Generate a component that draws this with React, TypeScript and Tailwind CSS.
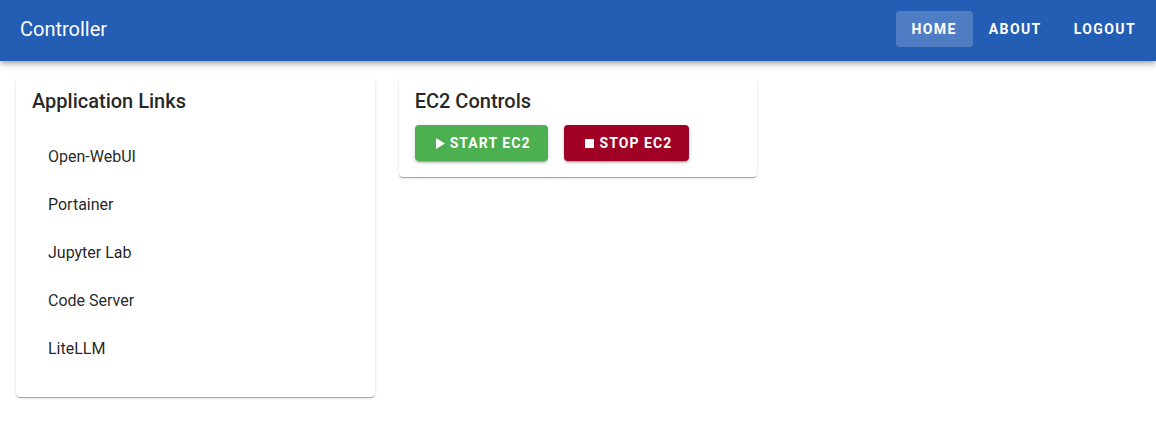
import React from "react";

const links = ["Open-WebUI", "Portainer", "Jupyter Lab", "Code Server", "LiteLLM"];

const nav = [
  { label: "HOME", active: true },
  { label: "ABOUT", active: false },
  { label: "LOGOUT", active: false },
];

const cardShadow =
  "shadow-[0px_2px_1px_-1px_rgba(0,0,0,0.2),0px_1px_1px_0px_rgba(0,0,0,0.14),0px_1px_3px_0px_rgba(0,0,0,0.12)]";

const btnShadow =
  "shadow-[0px_3px_1px_-2px_rgba(0,0,0,0.2),0px_2px_2px_0px_rgba(0,0,0,0.14),0px_1px_5px_0px_rgba(0,0,0,0.12)]";

function PlayIcon() {
  return (
    <svg width="9" height="11" viewBox="0 0 9 11" className="shrink-0">
      <path d="M0 0 L9 5.5 L0 11 Z" fill="currentColor" />
    </svg>
  );
}

function StopIcon() {
  return <span className="block size-[9px] shrink-0 bg-white" />;
}

export default function App() {
  return (
    <div className="min-h-[430px] bg-white font-['Roboto',sans-serif] text-[rgba(0,0,0,0.87)]">
      <header className="relative z-10 flex h-[61px] items-center bg-[#235db4] pb-[3px] pl-5 pr-1 text-white shadow-[0px_2px_4px_-1px_rgba(0,0,0,0.2),0px_4px_5px_0px_rgba(0,0,0,0.14),0px_1px_10px_0px_rgba(0,0,0,0.12)]">
        <h1 className="text-[20px] font-normal leading-none">Controller</h1>
        <nav className="ml-auto flex items-center">
          {nav.map((item) => (
            <button
              key={item.label}
              className={`h-9 rounded px-4 text-[14px] font-bold tracking-[0.1em] ${
                item.active ? "bg-white/20" : ""
              }`}
            >
              {item.label}
            </button>
          ))}
        </nav>
      </header>

      <main className="grid grid-cols-3 items-start gap-6 p-4">
        <section className={`rounded bg-white px-4 pb-4 pt-[14px] ${cardShadow}`}>
          <h2 className="mb-[14px] text-[20px] font-medium leading-5">Application Links</h2>
          <ul className="py-2">
            {links.map((l) => (
              <li key={l} className="flex h-12 items-center px-4 text-[16px] leading-6">
                {l}
              </li>
            ))}
          </ul>
        </section>

        <section className={`rounded bg-white px-4 pb-4 pt-[14px] ${cardShadow}`}>
          <h2 className="mb-[14px] text-[20px] font-medium leading-5">EC2 Controls</h2>
          <div className="flex gap-4">
            <button
              className={`flex h-9 items-center gap-[5px] rounded bg-[#4caf50] pl-[21px] pr-[17px] text-[14px] font-bold tracking-[0.075em] text-white ${btnShadow}`}
            >
              <PlayIcon />
              START EC2
            </button>
            <button
              className={`flex h-9 items-center gap-[6px] rounded bg-[#a10025] pl-[21px] pr-[17px] text-[14px] font-bold tracking-[0.075em] text-white ${btnShadow}`}
            >
              <StopIcon />
              STOP EC2
            </button>
          </div>
        </section>
      </main>
    </div>
  );
}
